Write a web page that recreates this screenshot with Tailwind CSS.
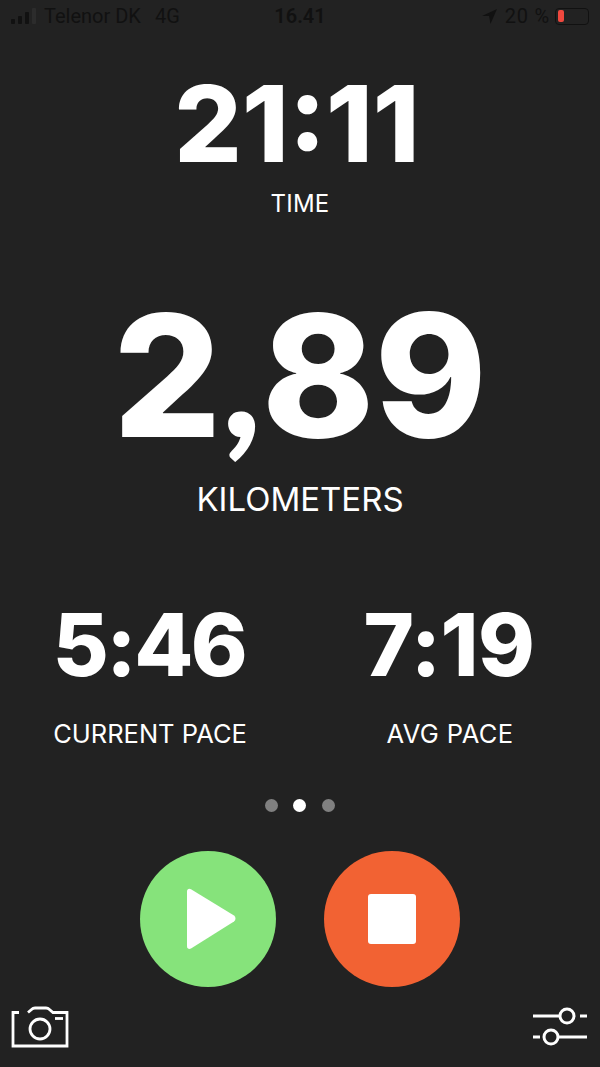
<!DOCTYPE html>
<html lang="en">
<head>
    <meta charset="UTF-8">
    <meta name="viewport" content="width=device-width, initial-scale=1.0">
    <title>Run</title>
    <script src="https://cdn.jsdelivr.net/npm/@tailwindcss/browser@4"></script>
</head>
<body class="bg-[#222222] font-['Inter',sans-serif]">
    <div class="w-[600px] h-[1067px] overflow-hidden flex flex-col text-white">
        <!-- Status bar -->
        <div class="h-[32px] pl-[11px] pr-[11px] flex items-center justify-between text-[#111111] text-[20px] font-['Roboto',sans-serif]">
            <div class="flex items-center w-[200px]">
                <svg class="w-[26px] h-[16px]" viewBox="0 0 26 16" fill="#111111">
                    <rect x="0" y="11" width="4" height="5" rx="1"/>
                    <rect x="7" y="8" width="4" height="8" rx="1"/>
                    <rect x="14" y="4" width="4" height="12" rx="1"/>
                    <rect x="21" y="0" width="4" height="16" rx="1" fill="#2c2c2c"/>
                </svg>
                <span class="ml-[7px]">Telenor DK</span>
                <span class="ml-[14px]">4G</span>
            </div>
            <span class="font-semibold">16.41</span>
            <div class="flex items-center w-[200px] justify-end">
                <svg class="w-[15px] h-[15px] mr-[8px]" viewBox="0 0 16 16" fill="#111111"><path d="M16 0 0 7.500h7.500L9 16z"/></svg>
                <span class="tracking-[0.8px]">20 %</span>
                <div class="ml-[5px] w-[34px] h-[17px] rounded-[4px] border border-[#111111] flex items-center pl-[2px]">
                    <div class="w-[6px] h-[12px] rounded-[2px] bg-[#f0483e]"></div>
                </div>
            </div>
        </div>

        <!-- Time -->
        <div class="mt-[37px] flex flex-col items-center">
            <div class="text-[106px] leading-[110px] font-extrabold pr-[6px]">21:11</div>
            <div class="mt-[10px] text-[24px] leading-[30px] tracking-[0.2px]">TIME</div>
        </div>

        <!-- Distance -->
        <div class="mt-[62px] flex flex-col items-center">
            <div class="text-[170px] leading-[180px] font-extrabold">2<span class="font-['Lato'] font-black">,</span>89</div>
            <div class="mt-[15px] text-[33px] leading-[38px]">KILOMETERS</div>
        </div>

        <!-- Pace -->
        <div class="mt-[82px] grid grid-cols-2">
            <div class="flex flex-col items-center">
                <div class="text-[86px] leading-[90px] font-extrabold tracking-[-2.500px] pr-[2px]">5:46</div>
                <div class="mt-[29px] text-[25.500px] leading-[30px]">CURRENT PACE</div>
            </div>
            <div class="flex flex-col items-center">
                <div class="text-[86px] leading-[90px] font-extrabold tracking-[-0.500px] pr-[2px]">7:19</div>
                <div class="mt-[29px] text-[25.500px] leading-[30px] tracking-[0.4px]">AVG PACE</div>
            </div>
        </div>

        <!-- Page dots -->
        <div class="mt-[50px] pr-[1px] flex justify-center gap-[15.500px]">
            <div class="w-[13px] h-[13px] rounded-full bg-[#808080]"></div>
            <div class="w-[13px] h-[13px] rounded-full bg-white"></div>
            <div class="w-[13px] h-[13px] rounded-full bg-[#808080]"></div>
        </div>

        <!-- Controls -->
        <div class="mt-[39px] flex justify-center gap-[48px]">
            <div class="w-[136px] h-[136px] rounded-full bg-[#86e37b] flex items-center justify-center">
                <svg class="w-[50px] h-[62px] ml-[6px]" viewBox="0 0 50 62" fill="white"><path d="M1 3.500C1 1 3 0 5 1.200L48 27.500C50 29 50 32 48 33.500L5 60.500C3 61.700 1 60.500 1 58z"/></svg>
            </div>
            <div class="w-[136px] h-[136px] rounded-full bg-[#f26233] flex items-center justify-center">
                <div class="w-[48px] h-[50px] rounded-[3px] bg-white"></div>
            </div>
        </div>

        <!-- Bottom icons -->
        <div class="mt-[19px] pl-[10px] pr-[12px] flex justify-between items-start">
            <svg class="w-[60px] h-[44px]" viewBox="0 0 60 44" fill="none" stroke="white" stroke-width="2.800">
                <path d="M9 6.500H3V40H57V6.500H43L39.500 3.500Q38 2 36 2H25Q23 2 21.500 3.500L18 6.500"/>
                <circle cx="30" cy="23" r="10"/>
                <path d="M45 12.500H53"/>
            </svg>
            <svg class="w-[56px] h-[40px]" viewBox="0 0 56 40" fill="none" stroke="white" stroke-width="3">
                <path d="M1 10H28"/>
                <circle cx="35" cy="10" r="7"/>
                <path d="M48 10H55"/>
                <path d="M1 31H8"/>
                <circle cx="19" cy="31" r="7"/>
                <path d="M26 31H55"/>
            </svg>
        </div>
    </div>
</body>
</html>
